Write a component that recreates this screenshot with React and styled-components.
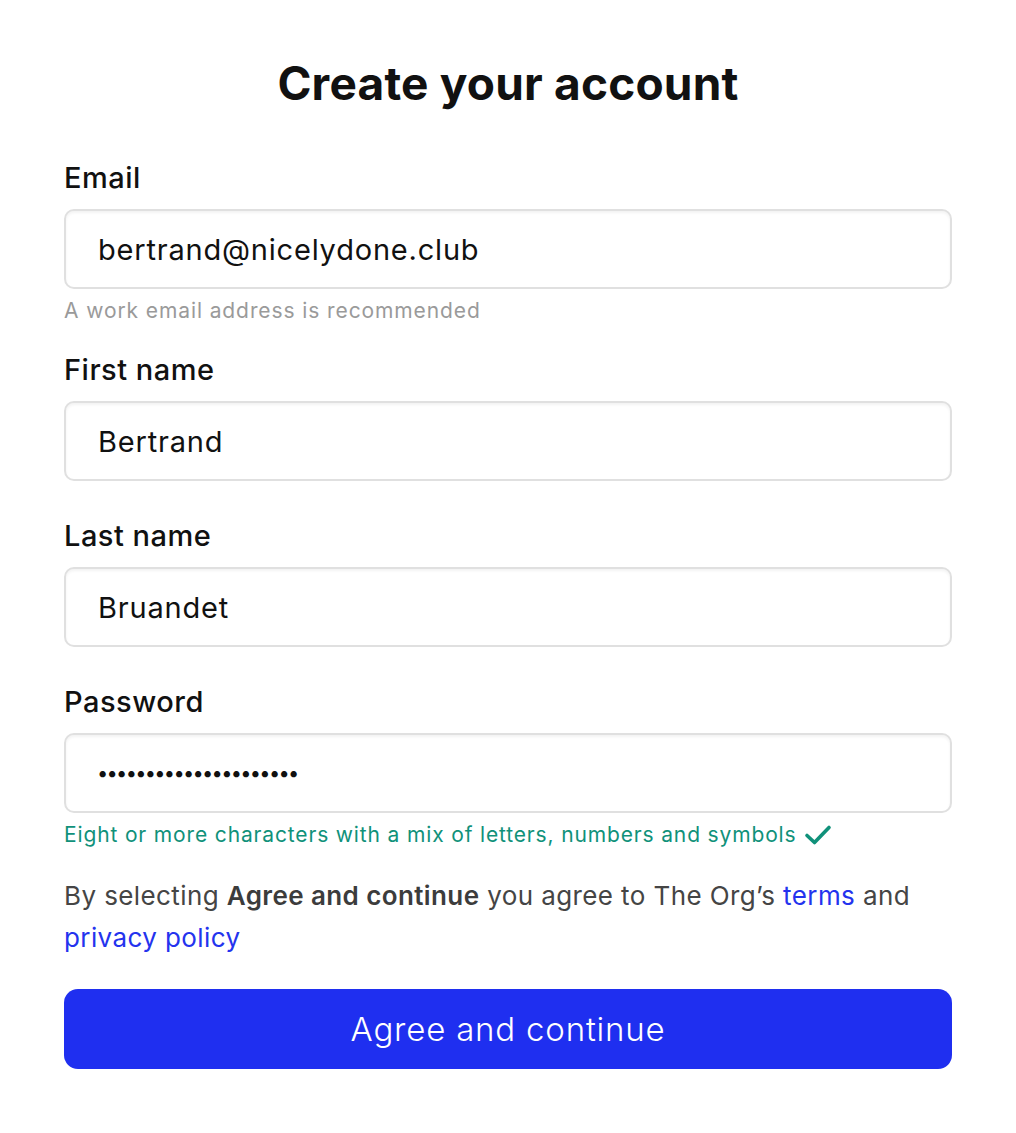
import React from "react";
import styled, { createGlobalStyle } from "styled-components";

const GlobalStyle = createGlobalStyle`
  * { box-sizing: border-box; }
  html, body { margin: 0; padding: 0; background: #ffffff; }
  body { font-family: Inter, "Noto Sans", "Liberation Sans", sans-serif; color: #111; }
`;

const Page = styled.main`
  width: 1016px;
  padding: 55px 64px 64px;
  display: flex;
  flex-direction: column;
`;

const Title = styled.h1`
  margin: 0;
  font-size: 46px;
  line-height: 56px;
  font-weight: 700;
  letter-spacing: 0.2px;
  text-align: center;
  color: #111;
`;

const Form = styled.form`
  display: flex;
  flex-direction: column;
  margin-top: 50px;
`;

const Field = styled.div`
  display: flex;
  flex-direction: column;
  margin-top: ${(p) => p.$gap || 0}px;
`;

const Label = styled.label`
  font-size: 29px;
  line-height: 34px;
  font-weight: 500;
  letter-spacing: 0.5px;
  color: #111;
  margin-bottom: 14px;
`;

const Input = styled.input`
  height: 80px;
  width: 100%;
  border: 2px solid #e0e0e0;
  border-radius: 10px;
  box-shadow: inset 0 2px 3px rgba(0, 0, 0, 0.05);
  padding: 0 32px;
  font-family: Inter, "Noto Sans", "Liberation Sans", sans-serif;
  font-size: 29px;
  letter-spacing: 0.8px;
  color: #111;
  background: #fff;
  outline: none;
`;

const PasswordInput = styled(Input)`
  font-size: 20px;
  letter-spacing: -1.7px;
  padding-left: 31px;
`;

const Hint = styled.div`
  margin-top: 10px;
  font-size: 21px;
  line-height: 24px;
  letter-spacing: ${(p) => (p.$ok ? "0.85px" : "0.9px")};
  color: ${(p) => (p.$ok ? "#10917a" : "#9a9a9a")};
  display: flex;
  align-items: center;
  gap: 8px;
`;

const Terms = styled.p`
  margin: 28px 0 0;
  font-size: 26px;
  line-height: 42px;
  letter-spacing: 0.4px;
  color: #454545;
`;

const Strong = styled.b`
  font-weight: 600;
  color: #3c3c3c;
`;

const Link = styled.a`
  color: #2433ee;
  text-decoration: none;
`;

const Button = styled.button`
  margin-top: 30px;
  height: 80px;
  width: 100%;
  border: none;
  border-radius: 14px;
  background: #1f2ff0;
  color: #fff;
  font-family: Inter, "Noto Sans", "Liberation Sans", sans-serif;
  font-size: 33px;
  font-weight: 300;
  letter-spacing: 0.8px;
  cursor: pointer;
`;

const Check = () => (
  <svg width="28" height="22" viewBox="0 0 28 22" fill="none">
    <path d="M3 11.5 L10.5 18.5 L25 3.5" stroke="#10917a" strokeWidth="3.6" strokeLinecap="round" strokeLinejoin="round" />
  </svg>
);

export default function App() {
  return (
    <>
      <GlobalStyle />
      <Page>
        <Title>Create your account</Title>
        <Form onSubmit={(e) => e.preventDefault()}>
          <Field>
            <Label htmlFor="email">Email</Label>
            <Input id="email" type="email" readOnly value="bertrand@nicelydone.club" />
            <Hint>A work email address is recommended</Hint>
          </Field>
          <Field $gap={30}>
            <Label htmlFor="first">First name</Label>
            <Input id="first" readOnly value="Bertrand" />
          </Field>
          <Field $gap={38}>
            <Label htmlFor="last">Last name</Label>
            <Input id="last" readOnly value="Bruandet" />
          </Field>
          <Field $gap={38}>
            <Label htmlFor="pw">Password</Label>
            <PasswordInput id="pw" type="password" readOnly value="abcdefghijklmnopqrstu" />
            <Hint $ok>
              Eight or more characters with a mix of letters, numbers and symbols
              <Check />
            </Hint>
          </Field>
          <Terms>
            By selecting <Strong>Agree and continue</Strong> you agree to The Org’s{" "}
            <Link href="#">terms</Link> and <Link href="#">privacy policy</Link>
          </Terms>
          <Button type="submit">Agree and continue</Button>
        </Form>
      </Page>
    </>
  );
}
